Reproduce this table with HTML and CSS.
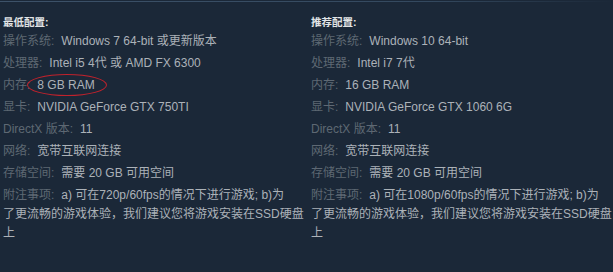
FILE: index.html
```html
<!DOCTYPE html>
<html lang="zh-CN">
<head>
<meta charset="utf-8">
<link rel="stylesheet" href="styles.css">
</head>
<body>
<div class="sysreq">
  <div class="col">
    <div class="head">最低配置:</div>
    <ul class="list">
      <li><span class="lbl">操作系统:</span><span class="val">Windows 7 64-bit 或更新版本</span></li>
      <li><span class="lbl">处理器:</span><span class="val">Intel i5 4代 或 AMD FX 6300</span></li>
      <li><span class="lbl">内存:</span><span class="val circled">8 GB RAM</span></li>
      <li><span class="lbl">显卡:</span><span class="val">NVIDIA GeForce GTX 750TI</span></li>
      <li><span class="lbl">DirectX 版本:</span><span class="val">11</span></li>
      <li><span class="lbl">网络:</span><span class="val">宽带互联网连接</span></li>
      <li><span class="lbl">存储空间:</span><span class="val">需要 20 GB 可用空间</span></li>
      <li><span class="lbl">附注事项:</span><span class="val">a) 可在720p/60fps的情况下进行游戏; b)为<br>了更流畅的游戏体验，我们建议您将游戏安装在SSD硬盘上</span></li>
    </ul>
  </div>
  <div class="col">
    <div class="head">推荐配置:</div>
    <ul class="list">
      <li><span class="lbl">操作系统:</span><span class="val">Windows 10 64-bit</span></li>
      <li><span class="lbl">处理器:</span><span class="val">Intel i7 7代</span></li>
      <li><span class="lbl">内存:</span><span class="val">16 GB RAM</span></li>
      <li><span class="lbl">显卡:</span><span class="val">NVIDIA GeForce GTX 1060 6G</span></li>
      <li><span class="lbl">DirectX 版本:</span><span class="val">11</span></li>
      <li><span class="lbl">网络:</span><span class="val">宽带互联网连接</span></li>
      <li><span class="lbl">存储空间:</span><span class="val">需要 20 GB 可用空间</span></li>
      <li><span class="lbl">附注事项:</span><span class="val">a) 可在1080p/60fps的情况下进行游戏; b)为<br>了更流畅的游戏体验，我们建议您将游戏安装在SSD硬盘上</span></li>
    </ul>
  </div>
</div>
</body>
</html>
```

FILE: styles.css
```css
html, body {
  margin: 0;
  padding: 0;
  background: #1b2838;
}
body {
  font-family: "Liberation Sans", Arial, "Noto Sans CJK SC", sans-serif;
  font-size: 12px;
  width: 613px;
  height: 272px;
  overflow: hidden;
}
.sysreq {
  margin-top: 1px;
  border-top: 1px solid transparent;
  border-image: linear-gradient(to right, #3d5269 0%, #34495f 70%, #1b2838 100%) 1;
  display: flex;
  gap: 6px;
  padding: 0 3px;
}
.col {
  width: 302px;
  flex: none;
  padding-top: 13px;
}
.head {
  font-size: 10.5px;
  font-weight: bold;
  line-height: 14px;
  color: #e1e4e6;
  margin-bottom: 3px;
}
.list {
  list-style: none;
  margin: 0;
  padding: 0;
}
.list li {
  line-height: 19px;
  margin-bottom: 3px;
  color: #acb2b8;
}
.lbl {
  color: #5e6873;
  margin-right: 7px;
}
.val {
  color: #acb2b8;
}
.circled {
  position: relative;
}
.circled::after {
  content: "";
  position: absolute;
  left: -10px;
  right: -12px;
  top: -4px;
  bottom: -4px;
  border: 1.2px solid #c0222c;
  border-radius: 50%;
}
```
